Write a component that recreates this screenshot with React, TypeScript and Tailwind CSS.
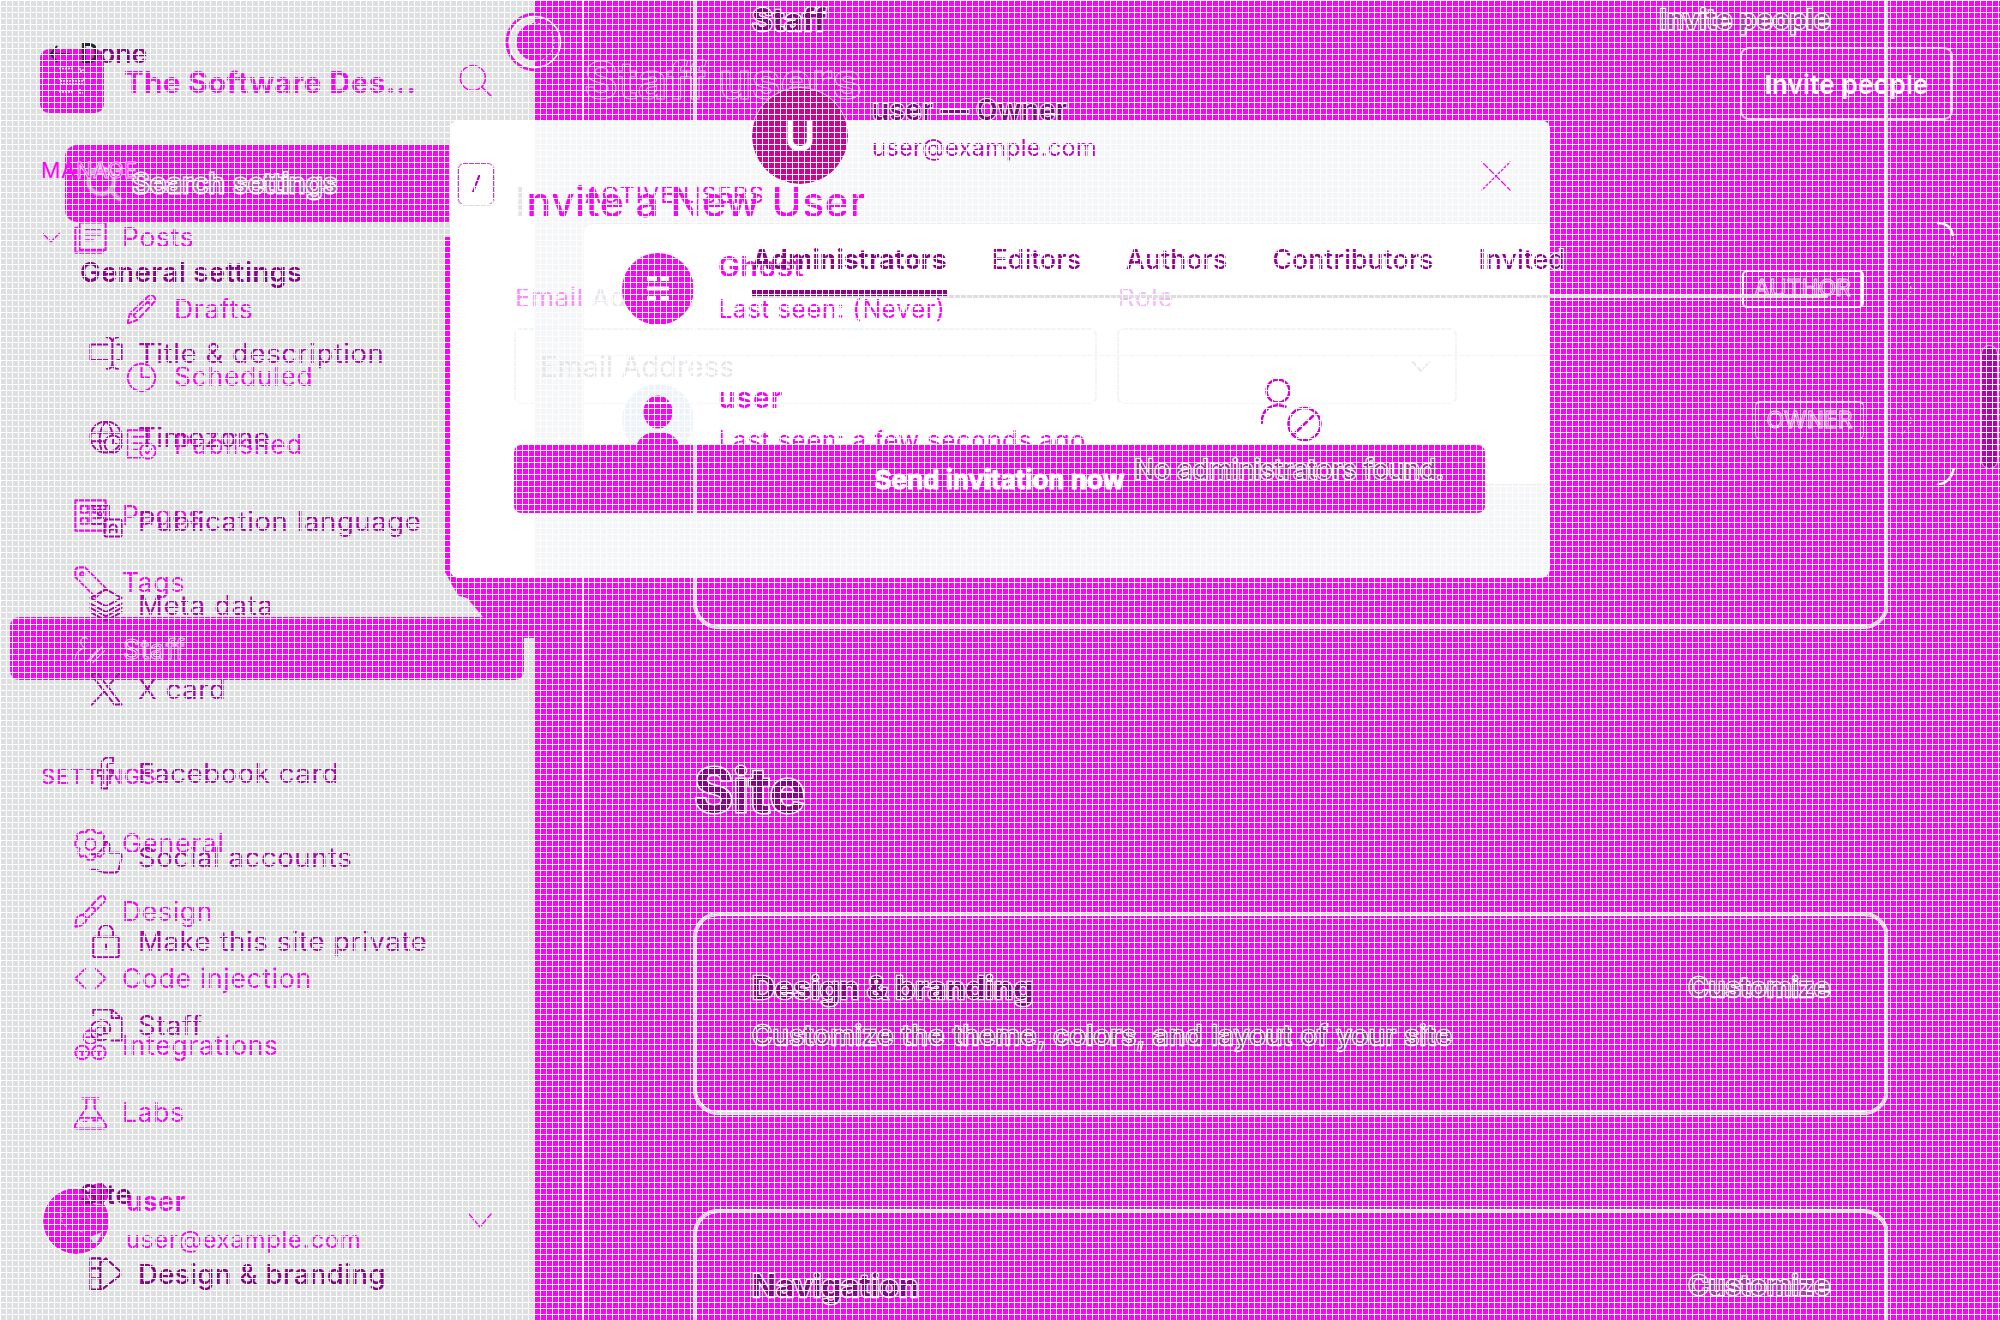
import type { ReactNode } from "react";

function Icon({ children, className = "size-8", sw = 1.5 }: { children: ReactNode; className?: string; sw?: number }) {
  return (
    <svg viewBox="0 0 24 24" fill="none" stroke="currentColor" strokeWidth={sw} strokeLinecap="round" strokeLinejoin="round" className={`shrink-0 ${className}`}>
      {children}
    </svg>
  );
}

/* ---------- site navigation (magenta) ---------- */

function NavRow({ icon, label, sub = false, className = "" }: { icon: ReactNode; label: string; sub?: boolean; className?: string }) {
  return (
    <div className={`flex h-[67.25px] items-center text-[26.5px] tracking-[0.7px] ${sub ? "pl-[126px]" : "pl-[74px]"} ${className}`}>
      <Icon className={sub ? "mr-[17px] size-[31px]" : "mr-[15px] size-[33px]"}>{icon}</Icon>
      <span>{label}</span>
    </div>
  );
}

function AdminSidebar() {
  return (
    <aside className="flex h-[1320px] w-[535px] flex-col text-[#ff00ff]">
      <header className="mt-[49px] flex h-16 items-center pl-10">
        <div className="flex size-16 items-center justify-center rounded-[9px] bg-[#ff00ff] text-white">
          <svg viewBox="0 0 28 28" className="size-7" fill="none" stroke="currentColor" strokeWidth="1.300" strokeDasharray="2 1">
            <path d="M1 1.5h14M22 1v3h3v-3M2 11v3h24v-3M2 17h24M1 25h14M22 22v4h3" />
          </svg>
        </div>
        <h1 className="ml-[20px] mt-[3px] w-[293px] whitespace-nowrap text-[29.5px] font-bold tracking-[0.4px]">The Software Des...</h1>
        <Icon className="ml-[42px] size-[34px]" sw={1.1}>
          <circle cx="9.8" cy="9.8" r="8.8" />
          <path d="M16.2 16.2l6.8 6.8" />
        </Icon>
      </header>

      <p className="relative z-10 mt-[47px] h-5 pl-[41px] text-[21.5px] leading-5 tracking-[0.5px]">
        MA<span className="[-webkit-text-stroke:1px_rgba(255,255,255,0.8)]">NAGE</span>
      </p>
      <nav className="mt-6">
        <div className="flex">
          <div className="-mr-[61px] flex w-[61px] items-center pl-[42px]">
            <Icon className="size-[18px]" sw={2}><path d="M1 6l11 11 11-11" /></Icon>
          </div>
          <NavRow label="Posts" icon={<><rect x="4" y="1" width="19" height="20" /><path d="M4 5H1v18h20v-2M8 6h11M8 10h11M8 14h6" /></>} />
        </div>
        <NavRow sub className="mt-[5px]" label="Drafts" icon={<path d="M1 23l2-8L17 2c3-3 7 1 5 4L9 20zM4 15l5 5M15 4l5 5M5 17L19 4" />} />
        <NavRow sub label="Scheduled" icon={<><circle cx="12" cy="12" r="10.6" /><path d="M12 4v8h6" /></>} />
        <NavRow sub label="Published" icon={<><path d="M11 22H1V1h17v7M5 6h9M5 11h7M5 16h4" /><circle cx="17" cy="17" r="6" /><path d="M14.5 17l2 2 3-3.500" /></>} />
        <NavRow className="mt-[4px]" label="Pages" icon={<><rect x="1" y="1" width="22" height="22" /><path d="M5 5h5v5H5zM14 5v5h5V5zM5 14h5v4H5zM14 14h5M14 18h5" /></>} />
        <NavRow label="Tags" icon={<><path d="M1 4c0-2 1-3 3-3h4l15 15-7 7L1 8z" /><circle cx="6" cy="6" r="1.500" /></>} />
        <div className="ml-[10px] flex h-[63px] w-[514px] items-center rounded-[9px] bg-[#ff00ff] pl-16">
          <Icon className="mr-[17px] size-8 text-white/80" sw={0.9}>
            <path d="M1 20c0-4 3-7 7-8m2-7c-4-3-7 3-3 6M12 21l10-11M14 23l9-9M10 22l8-9" strokeDasharray="1.500 1" />
          </Icon>
          <span className="mt-1 text-[26.5px] tracking-[0.65px] [-webkit-text-stroke:1px_rgba(255,255,255,0.8)]">Staff</span>
        </div>
      </nav>

      <p className="mt-[86px] h-5 pl-[41px] text-[22px] font-medium leading-5 tracking-[0.7px]">SETTINGS</p>
      <nav className="mt-[25px]">
        <NavRow label="General" icon={<><path d="M9 3l1-2h4l1 2 3 1 2-1 2 3-1 2 2 3v2l-2 2 1 3-3 3-3-1-2 3h-4l-2-3-3 1-2-3 1-3-3-2v-3l2-2-1-3 3-2z" /><circle cx="12" cy="12" r="4" /></>} />
        <NavRow label="Design" icon={<path d="M1 23c1-3-1-6 3-8s6 3 4 5-4 3-7 3zM7 14L18 2c3-3 6 0 4 3L10 17M13 8l3 3" />} />
        <NavRow label="Code injection" icon={<path d="M8 5l-7 7 7 7M16 5l7 7-7 7" />} />
        <NavRow label="Integrations" icon={<><circle cx="12" cy="6" r="5" /><circle cx="6" cy="17" r="5" /><circle cx="18" cy="17" r="5" /><path d="M9 6h6M3 16h6M15 16h6M6 16v4M18 16v4" /></>} />
        <NavRow label="Labs" icon={<path d="M6 1h12M9 1v7L1 20c-1 2 0 3 2 3h18c2 0 3-1 2-3L15 8V1M4 15h16M7 18h2M14 17h3" />} />
      </nav>

      <footer className="mt-[41px] flex h-[66px] items-center pl-[43px]">
        <div className="relative size-[66px] rounded-full bg-[#ff00ff] outline-1 outline-white">
          <span className="absolute left-[45px] -top-[5px] size-[21px] rounded-full bg-[#ff00ff] outline-1 outline-white" />
          <svg viewBox="0 0 66 66" className="absolute inset-0" fill="none" stroke="white">
            <path d="M20 20q-6 12 6 22l14 2" strokeOpacity=".6" strokeDasharray="3 3" />
            <path d="M47 49l12-5-4 9-5 2z" fill="#cfd3dd" stroke="none" />
          </svg>
        </div>
        <div className="ml-[17px] w-[342px]">
          <p className="h-[37px] text-[26px] font-bold leading-[30px] tracking-[0.8px]">user</p>
          <p className="h-[30px] text-[24px] leading-[31px] tracking-[0.68px]">user@example.com</p>
        </div>
        <Icon className="size-6" sw={1.4}><path d="M1 5l11 13L23 5" /></Icon>
      </footer>
    </aside>
  );
}

function UserRow({ avatar, name, seen, badge }: { avatar: ReactNode; name: string; seen: string; badge: ReactNode }) {
  return (
    <div className="flex h-[131px] items-center pl-[40px] pr-[43px]">
      {avatar}
      <div className="ml-[24px] flex-1">
        <p className="text-[29px] font-semibold leading-[41px] tracking-[0.6px]">{name}</p>
        <p className="text-[25.5px] leading-[44px] tracking-[0.35px]">{seen}</p>
      </div>
      {badge}
      <svg viewBox="0 0 12 30" className="ml-9 h-[30px] w-3" fill="none" stroke="white" strokeDasharray="2 3">
        <path d="M1 1q20 14 0 28" />
      </svg>
    </div>
  );
}

function StaffUsersPage() {
  return (
    <section className="h-[1320px] w-[1465px] pl-[47px] pr-[45px] text-[#ff00ff]">
      <header className="flex h-[174px] items-start justify-between pt-[47px]">
        <h2 className="ml-[2px] mt-1 text-[52px] font-bold leading-[60px] [-webkit-text-stroke:1px_rgba(255,255,255,0.6)]">Staff users</h2>
        <div className="mr-[2px] flex h-[73px] w-[213px] items-center justify-center rounded-[9px] border-2 border-white/80 pt-px text-[26px] font-semibold tracking-[0.2px] text-white">
          Invite people
        </div>
      </header>
      <p className="ml-[3px] h-[49px] pt-[10px] text-[23.5px] leading-[22px] tracking-[1px]">ACTIVE USERS</p>
      <div className="h-[263px] rounded-[22px]">
        <UserRow
          name="Ghost"
          seen="Last seen: (Never)"
          avatar={
            <div className="flex size-[72px] items-center justify-center rounded-full bg-[#ff00ff]">
              <svg viewBox="0 0 22 26" className="h-[26px] w-[22px]" fill="none" stroke="white" strokeWidth="4">
                <path d="M0 3h10M14 3h8M0 12.500h22M0 22h9M13 22h9" />
              </svg>
            </div>
          }
          badge={<span className="flex h-[38px] w-[122px] items-center justify-center rounded-[5px] border-2 border-r-[3px] border-white text-[23px] [-webkit-text-stroke:1px_rgba(255,255,255,0.8)]">AUTHOR</span>}
        />
        <UserRow
          name="user"
          seen="Last seen: a few seconds ago"
          avatar={
            <div className="size-[72px] overflow-hidden rounded-full bg-[#edf3f9]">
              <svg viewBox="0 0 72 72" className="size-[72px]" fill="#ff00ff">
                <ellipse cx="36" cy="28" rx="14.500" ry="16.500" />
                <path d="M13 72c0-16 8-24 23-24s23 8 23 24z" />
              </svg>
            </div>
          }
          badge={<span className="flex h-[38px] w-[109px] items-center justify-center rounded-[5px] border border-t-2 border-white/80 text-[23px] [-webkit-text-stroke:1px_rgba(255,255,255,0.8)]">OWNER</span>}
        />
      </div>
    </section>
  );
}

/* ---------- invite dialog ---------- */

function InviteDialogSurface() {
  return (
    <div className="absolute left-[450px] top-[120px] flex h-[458px] w-[1100px] overflow-hidden rounded-[9px] bg-[#f5f6f8]">
      <div className="w-[85px] bg-white" />
      <div className="flex-1 pl-[49px] pt-[103px]">
        <div className="h-[262px] rounded-l-[9px] border-y border-[#ececee] bg-white pt-[131px]">
          <div className="border-t border-[#f1f3f5]" />
        </div>
      </div>
    </div>
  );
}

function InviteDialogLabels() {
  return (
    <div className="absolute left-[514px] top-[283px] flex gap-5 text-[26px] leading-[30px] tracking-[0.6px]">
      <p className="w-[583px] pl-px text-[#e6e6ea]"><span className="text-[#ff8aff]">Email</span> Address</p>
      <p className="pl-px text-[#f7b8f7]">Role</p>
    </div>
  );
}

function InviteDialogForm() {
  return (
    <div className="absolute left-[450px] top-[120px] flex h-[458px] w-[1100px] flex-col pl-16 pr-[65px]">
      <header className="flex h-[208px] items-start justify-between">
        <h3 className="mt-[57px] pl-px text-[41px] font-medium leading-[50px] tracking-[0.4px] text-[#ff00ff]">
          <span className="text-[#e4e4e6]">I</span>nvite a New User
        </h3>
        <Icon className="-mr-[27px] mt-10 size-8 text-[#ff00ff]" sw={0.9}><path d="M1.500 1.500l21 21M22.500 1.500l-21 21" /></Icon>
      </header>
      <div className="flex gap-5">
        <div className="flex h-[76px] w-[583px] items-center rounded-[7px] border-2 border-[#f2f5f8] pl-[24px] pt-[2px] text-[28.5px] tracking-[0.25px] text-[#e4e6e8]">Email Address</div>
        <div className="flex h-[76px] w-[340px] items-center justify-end rounded-[7px] border-2 border-[#f2f5f8] pr-6 text-[#e2e4e6]">
          <Icon className="size-5" sw={2}><path d="M2 7l10 11L22 7" /></Icon>
        </div>
      </div>
      <button className="mt-[41px] h-[68px] w-full rounded-[7px] bg-[#ff00ff] pt-px text-[26px] font-bold text-white [-webkit-text-stroke:1px_white]">Send invitation now</button>
    </div>
  );
}

/* ---------- settings screen (purple) ---------- */

const settings: { label: string; icon: ReactNode }[] = [
  { label: "Title & description", icon: <path d="M13 6H1v11h12M20 6h3v11h-3M12.500 .8q4 0 4 4v14.400q0 4-4 4M20.500 .8q-4 0-4 4M20.500 23.200q-4 0-4-4" /> },
  { label: "Timezone", icon: <><circle cx="12" cy="12" r="11" /><path d="M1.500 9h21M1.500 15h9M12 1c-5 5-6 16-2 22M12 1c3 3 4 5 4.500 9" /><circle cx="17" cy="17" r="6" /><path d="M17 14v3h2.500" /></> },
  { label: "Publication language", icon: <><path d="M10 14H1V1h13v9M4 4h7M5 10c3-1 5-3 5-6M5 5c1 3 3 4 5 5" /><rect x="11" y="11" width="12" height="12" rx="1" /><path d="M14.500 20v-4q2.500-3 5 0v4M14.500 18h5" /></> },
  { label: "Meta data", icon: <path d="M12 1L23 7l-11 6L1 7zM1 11l11 6 11-6M1 14l11 6 11-6M1 17l11 6 11-6" /> },
  { label: "X card", icon: <path d="M1 1h5l17 22h-5zM21.500 1L13 10.500M10.500 14L2 23" /> },
  { label: "Facebook card", icon: <path d="M17 5h-2q-2 0-2 2v3h4l-1 4h-3v9H9v-9H6v-4h3V6q0-5 5-5h3z" /> },
  { label: "Social accounts", icon: <path d="M1 10h4c4-2 6-5 6-9 4 0 4 4 3 8h7q2 0 2 3l-2 9q-1 2-3 2h-7l-6-2H1" /> },
  { label: "Make this site private", icon: <><rect x="3" y="9" width="18" height="14.500" rx="1" /><path d="M7 9V6c0-7 10-7 10 0v3M12 14.500v3" /></> },
  { label: "Staff", icon: <><path d="M3 5V1h13l7 6v16h-7M16 1v6h7" /><circle cx="8" cy="16" r="3" /><path d="M11 13v5q4 0 4-3c0-9-14-8-14 1 0 6 6 8 11 6" /></> },
];

function SettingsSidebar() {
  return (
    <aside className="h-[1320px] w-[535px] text-[27.5px] tracking-[0.6px] text-[#b400b4]">
      <div className="flex h-[106px] items-center pl-[50px] pt-[2px] text-[26.500px] font-semibold tracking-normal text-[#8c008c]">
        <Icon className="mr-[10px] size-5 text-[#22262e]" sw={2.400}><path d="M8 3L1 12l7 9M1 12h22" /></Icon>
        <span className="text-[#22262e]">D</span>one
      </div>

      <div className="relative mt-[39px] ml-[65px] flex h-[77px] w-[384px] items-center rounded-l-[12px] bg-[#ff00ff]">
        <Icon className="ml-[22px] size-[34px] text-[#c9a3c9] drop-shadow-[0_0_1px_white]" sw={1.9}>
          <circle cx="10" cy="10" r="9" />
          <path d="M16.500 16.500L23 23" />
        </Icon>
        <span className="ml-[11px] pt-px tracking-[0.3px] text-[#b45fb4] [-webkit-text-stroke:3px_#f4eef4] [paint-order:stroke]">Search settings</span>
        <kbd className="absolute left-[393px] flex h-[42px] w-[36px] items-center justify-center rounded-[6px] border border-[#c43bc4] bg-white font-sans text-[26px] tracking-normal text-[#b400b4] outline-1 outline-[#dcdcdc]">/</kbd>
      </div>

      <h4 className="mt-[23px] h-[66px] pl-[80px] font-semibold leading-[55px] tracking-[0.35px] text-[#8c008c]">General settings</h4>
      <nav>
        {settings.map((s) => (
          <div key={s.label} className="flex h-[84px] items-center pl-[89px]">
            <Icon className="mr-[15px] size-[34px]" sw={1.4}>{s.icon}</Icon>
            <span className="pt-[2px]">{s.label}</span>
          </div>
        ))}
      </nav>
      <h4 className="mt-[101px] h-[52px] pl-[80px] font-semibold leading-[53px] tracking-[0.3px] text-[#8c008c]">Site</h4>
      <div className="mt-[12px] flex h-[84px] items-center pl-[89px] font-medium tracking-[0.4px] text-[#8c008c]">
        <Icon className="mr-[15px] size-[34px]"><path d="M1 1h7v22H1zM1 8h7M1 15h7M8 4l4-3 10 9v3L9 23" /></Icon>
        <span className="pt-[2px]">Design &amp; branding</span>
      </div>
    </aside>
  );
}

function CardHeading({ title, action }: { title: string; action: string }) {
  return (
    <div className="flex h-10 items-center justify-between [-webkit-text-stroke:2.5px_#f8f2f8] [paint-order:stroke]">
      <h4 className="text-[31.5px] font-bold text-[#8c008c]">{title}</h4>
      <span className="text-[27.5px] font-semibold text-[#b03cb0]">{action}</span>
    </div>
  );
}

function SettingsContent() {
  return (
    <main className="flex h-[1320px] w-[1353px] flex-col overflow-hidden pl-[159px] [&>section]:rounded-[24px] [&>section]:border-2 [&>section]:border-[#dadcde] [&>section]:shadow-[inset_0_0_0_1px_white] [&>section]:outline-1 [&>section]:outline-white">
      <section className="-mt-8 h-[660px] shrink-0 px-14 pt-[30px]">
        <CardHeading title="Staff" action="Invite people" />
        <div className="mt-[48px] flex h-24">
          <div className="flex size-24 items-center justify-center rounded-full bg-[#cf0094] text-[42px] font-semibold leading-none text-white outline-1 outline-white/70">U</div>
          <div className="ml-6 mt-[3px]">
            <p className="h-[38px] text-[28px] font-semibold leading-[38px] tracking-[0.25px] text-[#8c008c] [-webkit-text-stroke:2px_#f1eaf1] [paint-order:stroke]">user — Owner</p>
            <p className="h-[38px] text-[23.5px] leading-[37px] tracking-[0.3px] text-[#c400c4]">user@example.com</p>
          </div>
        </div>
        <div className="mt-[50px] flex h-[64px] w-[1076px] gap-[45px] border-b-[3px] border-[#dedede] text-[26.5px] font-medium leading-[50px] tracking-[0.15px] text-[#960096] [&>span]:h-[62px]">
          <span className="border-b-[6px] border-[#8c008c] font-bold text-[#8c008c]">Administrators</span>
          <span>Editors</span>
          <span>Authors</span>
          <span>Contributors</span>
          <span className="[-webkit-text-stroke:2px_white] [paint-order:stroke]">Invited</span>
        </div>
        <div className="flex flex-col items-center pt-[80px]">
          <svg viewBox="0 0 62 64" className="h-16 w-[62px]" fill="none" stroke="#d400d4" strokeWidth="2.500">
            <circle cx="18" cy="13" r="11.500" />
            <path d="M1.500 46c0-16 12-22 25-17" />
            <circle cx="44.500" cy="46" r="16" />
            <path d="M34 56l21-20" />
          </svg>
          <p className="mt-[11px] pr-1 text-[26.5px] leading-[33px] text-[#a52fa5] [-webkit-text-stroke:2.5px_#f8f2f8] [paint-order:stroke]">No administrators found.</p>
        </div>
      </section>

      <h3 className="mt-[134px] h-[60px] shrink-0 text-[60px] font-bold leading-[57px] tracking-[-0.5px] text-[#8c008c] [-webkit-text-stroke:3px_#f8f2f8] [paint-order:stroke]">Site</h3>

      <section className="mt-[91px] h-[201px] shrink-0 px-14 pt-[53px]">
        <CardHeading title="Design & branding" action="Customize" />
        <p className="mt-[7px] text-[27.5px] leading-10 tracking-[0.47px] text-[#a02fa0] [-webkit-text-stroke:2.5px_#f8f2f8] [paint-order:stroke]">Customize the theme, colors, and layout of your site</p>
      </section>

      <section className="mt-[96px] h-[203px] shrink-0 px-14 pt-[54px]">
        <CardHeading title="Navigation" action="Customize" />
      </section>
    </main>
  );
}

export default function App() {
  return (
    <div className="relative h-[1320px] w-[2000px] overflow-hidden bg-[linear-gradient(to_right,#dddfe1_535px,#ff00ff_535px)] font-['Inter',sans-serif]">
      {/* edge of the page panel and the dialog's cast shadow */}
      <div className="absolute left-[582px] top-0 h-full w-[2px] bg-white" />
      <div className="absolute left-[445px] top-[237px] h-[401px] w-[90px] bg-[#ff00ff] [clip-path:polygon(0_0,90px_0,90px_401px,79px_401px,79px_390px,38px_380px,22px_361px,14px_359px,8px_350px,0_335px)]" />
      <InviteDialogSurface />
      <InviteDialogLabels />

      <div className="absolute inset-0 flex">
        <AdminSidebar />
        <StaffUsersPage />
      </div>
      <svg viewBox="0 0 60 60" className="absolute left-[505px] top-3 size-[60px]" fill="none">
        <circle cx="30" cy="30" r="28" stroke="#ff00ff" strokeWidth="3" />
        <circle cx="30" cy="30" r="25.500" stroke="white" strokeWidth="1.500" />
        <circle cx="30" cy="30" r="19" fill="#ff00ff" stroke="white" strokeDasharray="2 2" />
      </svg>
      <svg viewBox="0 0 30 264" className="absolute left-[1925px] top-[221px] h-[264px] w-[30px]" fill="none" stroke="white">
        <path d="M12 2q14 0 16 13" strokeWidth="2.500" />
        <path d="M28.500 16v26" strokeDasharray="3 5" />
        <path d="M12 264q14-2 17-17" strokeWidth="2.500" />
      </svg>

      <InviteDialogForm />

      <div className="absolute inset-0 flex">
        <SettingsSidebar />
        <SettingsContent />
      </div>
      {/* card frame fades out where the dialog covers it */}
      <div className="absolute left-[693px] top-[120px] h-[458px] w-1 bg-[linear-gradient(#f5f6f8_104px,#ffffff_104px,#ffffff_325px,#dadcde_325px,#dadcde_392px,#f5f6f8_392px)]" />
      <div className="absolute left-[1982px] top-[346px] h-[122px] w-[15px] rounded-full bg-[#b400b4] outline-1 outline-white/70" />

      {/* 6px mesh over the whole window */}
      <div className="pointer-events-none absolute inset-0 bg-[linear-gradient(to_right,white_1px,transparent_1px),linear-gradient(to_bottom,white_1px,transparent_1px)] bg-[size:6px_6px]" />
    </div>
  );
}
